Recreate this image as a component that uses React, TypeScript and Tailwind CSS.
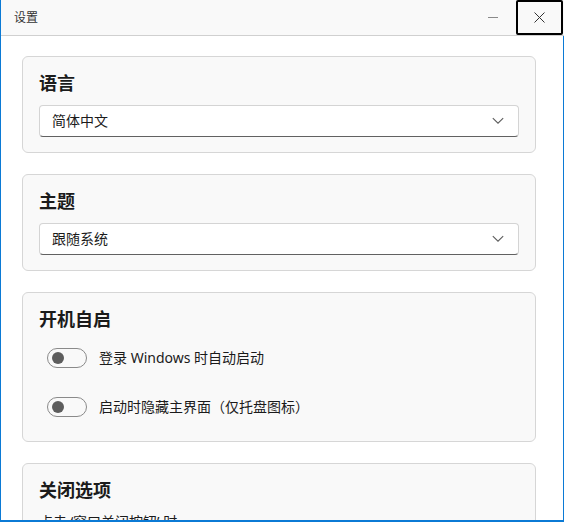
import React from "react";

const font = { fontFamily: '"Noto Sans", "Noto Sans CJK SC", sans-serif' };

function Chevron() {
  return (
    <svg width="12" height="8" viewBox="0 0 12 8" fill="none">
      <path d="M0.8 1.2 L6 6.2 L11.2 1.2" stroke="#5c5c5c" strokeWidth="1.1" />
    </svg>
  );
}

function Select({ value }: { value: string }) {
  return (
    <div className="mt-[10px] flex h-[32px] items-center justify-between rounded-[4px] border border-[#d4d4d4] border-b-[#616161] bg-white pl-[12px] pr-[14px]">
      <span className="text-[14px] leading-[20px] text-[#1b1b1b]">{value}</span>
      <Chevron />
    </div>
  );
}

function Toggle() {
  return (
    <div className="flex h-[20px] w-[40px] items-center rounded-full border border-[#8a8a8a] bg-[#f9f9f9] pl-[4px]">
      <div className="h-[12px] w-[12px] rounded-full bg-[#5d5d5d]" />
    </div>
  );
}

function Card({ title, children, pb = "pb-[15px]" }: { title: string; children?: React.ReactNode; pb?: string }) {
  return (
    <div className={`rounded-[6px] border border-[#d6d6d6] bg-[#f9f9f9] px-[16px] pt-[14px] ${pb}`}>
      <div className="text-[18px] font-bold leading-[24px] text-[#1b1b1b]">{title}</div>
      {children}
    </div>
  );
}

export default function App() {
  return (
    <div style={font} className="flex h-[522px] w-[564px] flex-col overflow-hidden border-l border-[#0b7ad5] bg-white">
      <div className="relative flex h-[36px] shrink-0 items-center border-b border-[#d0d0d0] bg-[#f9f9f9]">
        <span className="ml-[13px] text-[12px] leading-[16px] text-[#333]">设置</span>
        <div className="ml-auto flex h-[35px] items-center self-start">
          <div className="flex h-[35px] w-[46px] items-center justify-center">
            <div className="h-[1px] w-[10px] bg-[#8a8a8a]" />
          </div>
          <div className="flex h-[35px] w-[47px] items-center justify-center rounded-[2px] border-2 border-black">
            <svg width="11" height="11" viewBox="0 0 11 11">
              <path d="M0.5 0.5 L10.5 10.5 M10.5 0.5 L0.5 10.5" stroke="#333" strokeWidth="1" />
            </svg>
          </div>
          <div className="w-[1px]" />
        </div>
      </div>
      <div className="flex min-h-0 flex-1 flex-col gap-[21px] overflow-hidden border-r border-b-2 border-[#0b7ad5] pl-[21px] pr-[27px] pt-[20px]">
        <Card title="语言">
          <Select value="简体中文" />
        </Card>
        <Card title="主题">
          <Select value="跟随系统" />
        </Card>
        <Card title="开机自启" pb="pb-[14px]">
          <div className="mt-[7px] flex flex-col gap-[9px]">
            {["登录 Windows 时自动启动", "启动时隐藏主界面（仅托盘图标）"].map((t) => (
              <div key={t} className="flex h-[40px] items-center pl-[8px]">
                <Toggle />
                <span className="ml-[12px] text-[14px] leading-[20px] text-[#1b1b1b]">{t}</span>
              </div>
            ))}
          </div>
        </Card>
        <div className="shrink-0">
          <Card title="关闭选项">
            <div className="mt-[10px] text-[14px] leading-[20px] text-[#1b1b1b]">点击 ‘窗口关闭按钮’ 时</div>
            <div className="mt-[10px] h-[60px]" />
          </Card>
        </div>
      </div>
    </div>
  );
}
